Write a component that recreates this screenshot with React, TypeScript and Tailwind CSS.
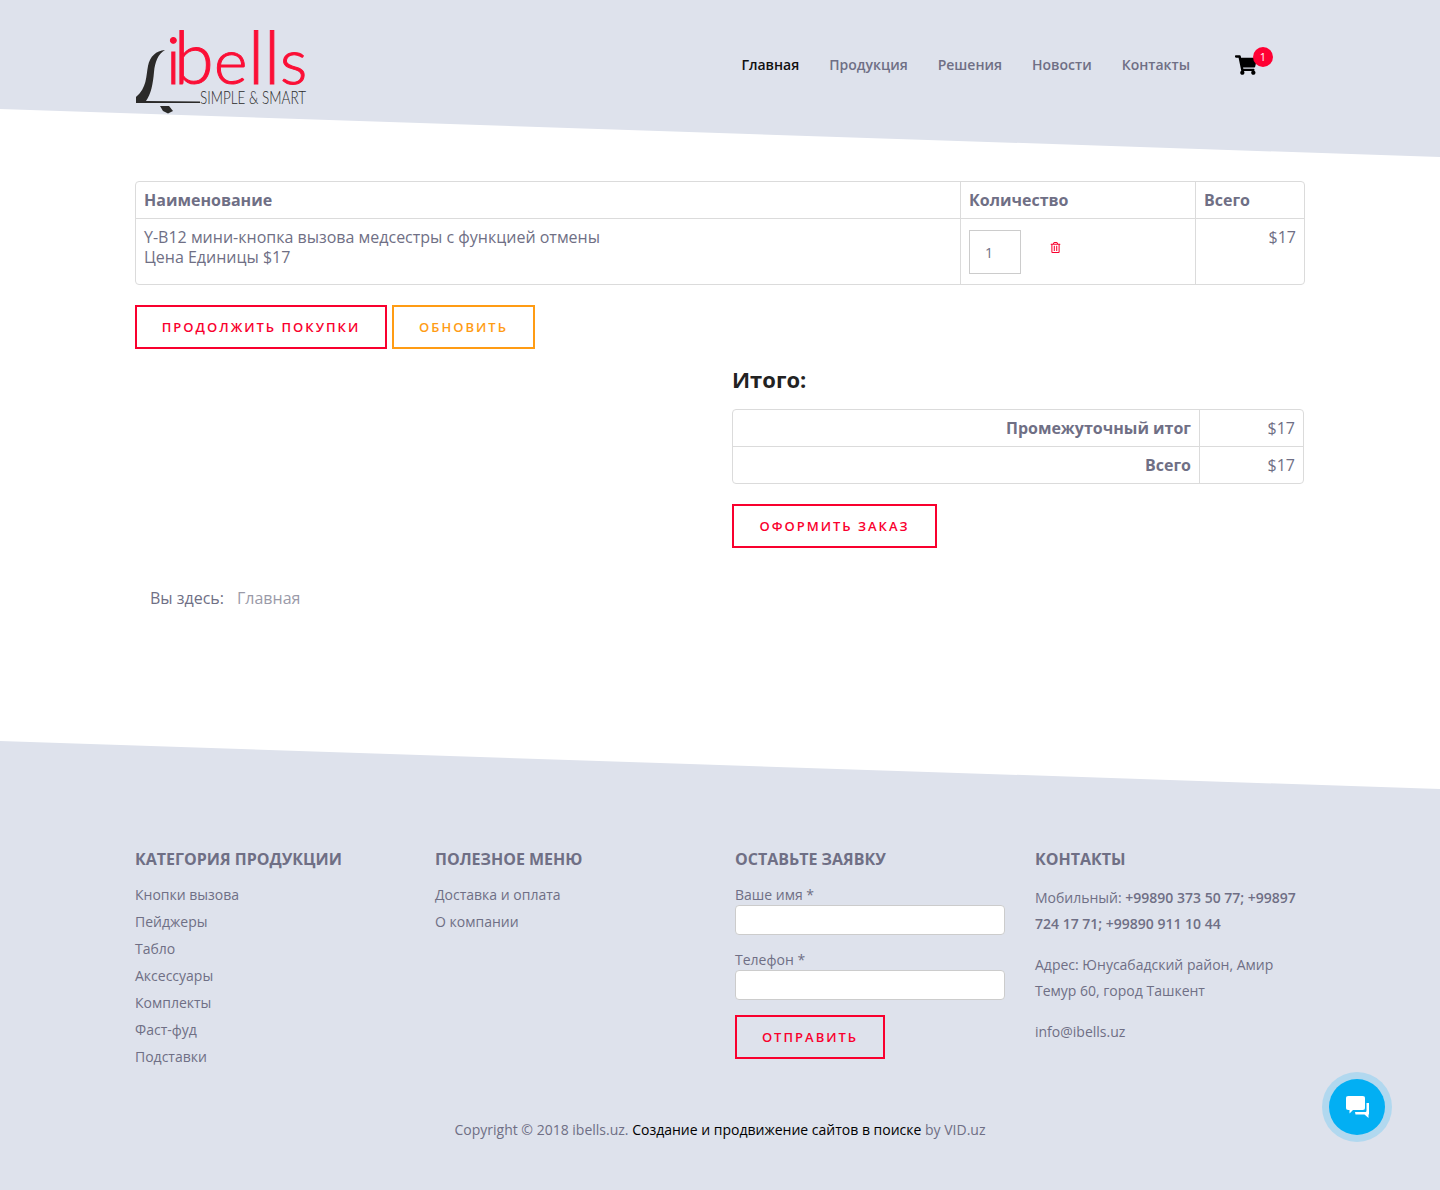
import React from 'react';
import { FaShoppingCart, FaRegTrashAlt } from 'react-icons/fa';

const categories = ['Кнопки вызова', 'Пейджеры', 'Табло', 'Аксессуары', 'Комплекты', 'Фаст-фуд', 'Подставки'];
const navItems = ['Продукция', 'Решения', 'Новости', 'Контакты'];

// each letter of the logo sits at its own x, the short ones are set smaller
const logoLetters = [
  { ch: 'i', x: 166, size: 66 },
  { ch: 'b', x: 174, size: 72 },
  { ch: 'e', x: 214, size: 64 },
  { ch: 'l', x: 248, size: 73 },
  { ch: 'l', x: 264, size: 73 },
  { ch: 's', x: 280, size: 64 },
];

function Logo() {
  return (
    <svg width="172" height="86" viewBox="135 28 172 86" className="block">
      <path
        d="M165 50C156 51 150 56 148 66C146 76 147 88 136 97L136 103L200 103L200 101.500L146 101C151 94 153 84 154 72C155 62 158 54 165 50Z"
        fill="#2b2a29"
      />
      <path d="M160 106L169 106L173 111L168 113.500L163 111Z" fill="#2b2a29" />
      <text y="84" fontFamily="Lato" fontWeight="300" fill="#fb0f36" stroke="#fb0f36" strokeWidth="1">
        {logoLetters.map((l, i) => (
          <tspan key={i} x={l.x} fontSize={l.size}>
            {l.ch}
          </tspan>
        ))}
      </text>
      <text
        x="200"
        y="104"
        fontFamily="Lato"
        fontWeight="300"
        fontSize="18"
        fill="#2b2a29"
        textLength="106"
        lengthAdjust="spacingAndGlyphs"
      >
        SIMPLE &amp; SMART
      </text>
    </svg>
  );
}

function RedButton({ label, className }: { label: string; className: string }) {
  return (
    <button className={`h-11 pt-px border-2 border-[#f9002e] text-[#f9002e] text-[13px] font-semibold tracking-[2px] uppercase ${className}`}>
      {label}
    </button>
  );
}

export default function App() {
  return (
    <div className="font-['Open_Sans',sans-serif] text-[#6f6f85] bg-white min-h-[1190px] overflow-hidden">
      <header className="h-[157px] bg-[#dee2ec] [clip-path:polygon(0_0,100%_0,100%_157px,0_109px)]">
        <div className="w-[1170px] mx-auto flex items-start justify-between">
          <div className="mt-[28px]">
            <Logo />
          </div>
          <nav className="flex items-center mt-[46px] mr-[48px] text-sm font-semibold">
            <a className="text-[#111] leading-[38px]">Главная</a>
            {navItems.map((item) => (
              <a key={item} className="ml-[30px] leading-[38px]">
                {item}
              </a>
            ))}
            <span className="relative ml-[45px] -mt-px text-black">
              <FaShoppingCart size={22} />
              <span className="absolute -top-[7px] left-[18px] w-5 h-5 rounded-full bg-[#ff0033] text-white text-[11px] font-normal leading-5 text-center">
                1
              </span>
            </span>
          </nav>
        </div>
      </header>

      <main className="w-[1170px] mx-auto h-[584px] pt-6">
        <table className="w-[1170px] border-separate border-spacing-0 border border-[#dbdbdb] rounded text-base">
          <thead>
            <tr className="h-[37px]">
              <th className="w-[824px] px-2 text-left font-bold border-b border-[#dbdbdb]">Наименование</th>
              <th className="w-[235px] px-2 text-left font-bold border-b border-l border-[#dbdbdb]">Количество</th>
              <th className="px-2 text-left font-bold border-b border-l border-[#dbdbdb]">Всего</th>
            </tr>
          </thead>
          <tbody>
            <tr className="h-[65px] align-top">
              <td className="px-2 pt-[8px] leading-5">
                Y-B12 мини-кнопка вызова медсестры с функцией отмены
                <br />
                Цена Единицы $17
              </td>
              <td className="px-2 pt-[11px] border-l border-[#dbdbdb]">
                <div className="flex">
                  <div className="w-[52px] h-[44px] border border-[#cccccc] text-sm leading-[44px] pl-[15px]">1</div>
                  <FaRegTrashAlt size={11} className="ml-[29px] mt-[12px] text-[#f9002e]" />
                </div>
              </td>
              <td className="px-2 pt-[8px] leading-5 text-right border-l border-[#dbdbdb]">$17</td>
            </tr>
          </tbody>
        </table>

        <div className="flex gap-[5px] mt-5">
          <RedButton label="Продолжить покупки" className="w-[252px]" />
          <button className="w-[143px] h-11 pt-px border-2 border-[#ff9c14] text-[#ff9c14] text-[13px] font-semibold tracking-[2px] uppercase">
            Обновить
          </button>
        </div>

        <div className="ml-[597px] w-[572px]">
          <h2 className="mt-[14px] text-[22px] leading-[33px] font-bold text-[#222]">Итого:</h2>
          <table className="mt-[13px] w-full border-separate border-spacing-0 border border-[#dbdbdb] rounded text-base">
            <tbody>
              <tr className="h-[37px]">
                <td className="px-2 text-right font-bold border-b border-[#dbdbdb]">Промежуточный итог</td>
                <td className="w-[104px] px-2 text-right border-b border-l border-[#dbdbdb]">$17</td>
              </tr>
              <tr className="h-[36px]">
                <td className="px-2 text-right font-bold">Всего</td>
                <td className="px-2 text-right border-l border-[#dbdbdb]">$17</td>
              </tr>
            </tbody>
          </table>
          <RedButton label="Оформить заказ" className="w-[205px] mt-5 block" />
        </div>

        <div className="flex mt-[38px] ml-[15px] text-base leading-6">
          <span>Вы здесь:</span>
          <span className="ml-[13px] text-[#9a9aa8]">Главная</span>
        </div>
      </main>

      <footer className="h-[449px] bg-[#dee2ec] [clip-path:polygon(0_0,100%_48px,100%_100%,0_100%)]">
        <div className="w-[1170px] mx-auto pt-[106px] grid grid-cols-[300px_300px_300px_270px] text-sm">
          <div>
            <h4 className="text-base font-bold uppercase leading-[24px]">Категория продукции</h4>
            <ul className="mt-[10px]">
              {categories.map((c) => (
                <li key={c} className="leading-[27px]">
                  {c}
                </li>
              ))}
            </ul>
          </div>
          <div>
            <h4 className="text-base font-bold uppercase leading-[24px]">Полезное меню</h4>
            <ul className="mt-[10px]">
              <li className="leading-[27px]">Доставка и оплата</li>
              <li className="leading-[27px]">О компании</li>
            </ul>
          </div>
          <div>
            <h4 className="text-base font-bold uppercase leading-[24px]">Оставьте заявку</h4>
            <label className="block mt-[14px] mb-px leading-[19px]">Ваше имя *</label>
            <input className="block w-[270px] h-[30px] bg-white rounded border border-[#cccccc]" />
            <label className="block mt-[15px] leading-[20px]">Телефон *</label>
            <input className="block w-[270px] h-[30px] bg-white rounded border border-[#cccccc]" />
            <RedButton label="Отправить" className="w-[150px] mt-[15px] block" />
          </div>
          <div>
            <h4 className="text-base font-bold uppercase leading-[24px]">Контакты</h4>
            <p className="mt-[14px] leading-[26px]">
              Мобильный: <b className="font-semibold">+99890 373 50 77; +99897 724 17 71; +99890 911 10 44</b>
            </p>
            <p className="mt-[15px] leading-[26px]">Адрес: Юнусабадский район, Амир Темур 60, город Ташкент</p>
            <p className="mt-[15px] leading-[26px]">info@ibells.uz</p>
          </div>
        </div>
        <p className="mt-[50px] text-center text-sm leading-5">
          Copyright © 2018 ibells.uz. <span className="text-black">Создание и продвижение сайтов в поиске</span> by VID.uz
        </p>
      </footer>

      <div className="fixed left-[1329px] top-[1079px] w-14 h-14 rounded-full bg-[#02aff3] shadow-[0_0_0_7px_#b1d8ef] flex items-center justify-center">
        <svg width="26" height="26" viewBox="0 0 26 26">
          <path
            d="M4.500 2H18.500C20.500 2 21 2.800 21 4.500V13.500C21 15.200 20.500 16 18.500 16H9L5.500 19.500V16H4.500C2.500 16 2 15.200 2 13.500V4.500C2 2.800 2.500 2 4.500 2Z"
            fill="#fff"
          />
          <path d="M22.500 9H25V20.500H24.500V24L20.500 20.500H11.500L11 18H21C22 18 22.500 17.500 22.500 16.500Z" fill="#fff" />
        </svg>
      </div>
    </div>
  );
}
